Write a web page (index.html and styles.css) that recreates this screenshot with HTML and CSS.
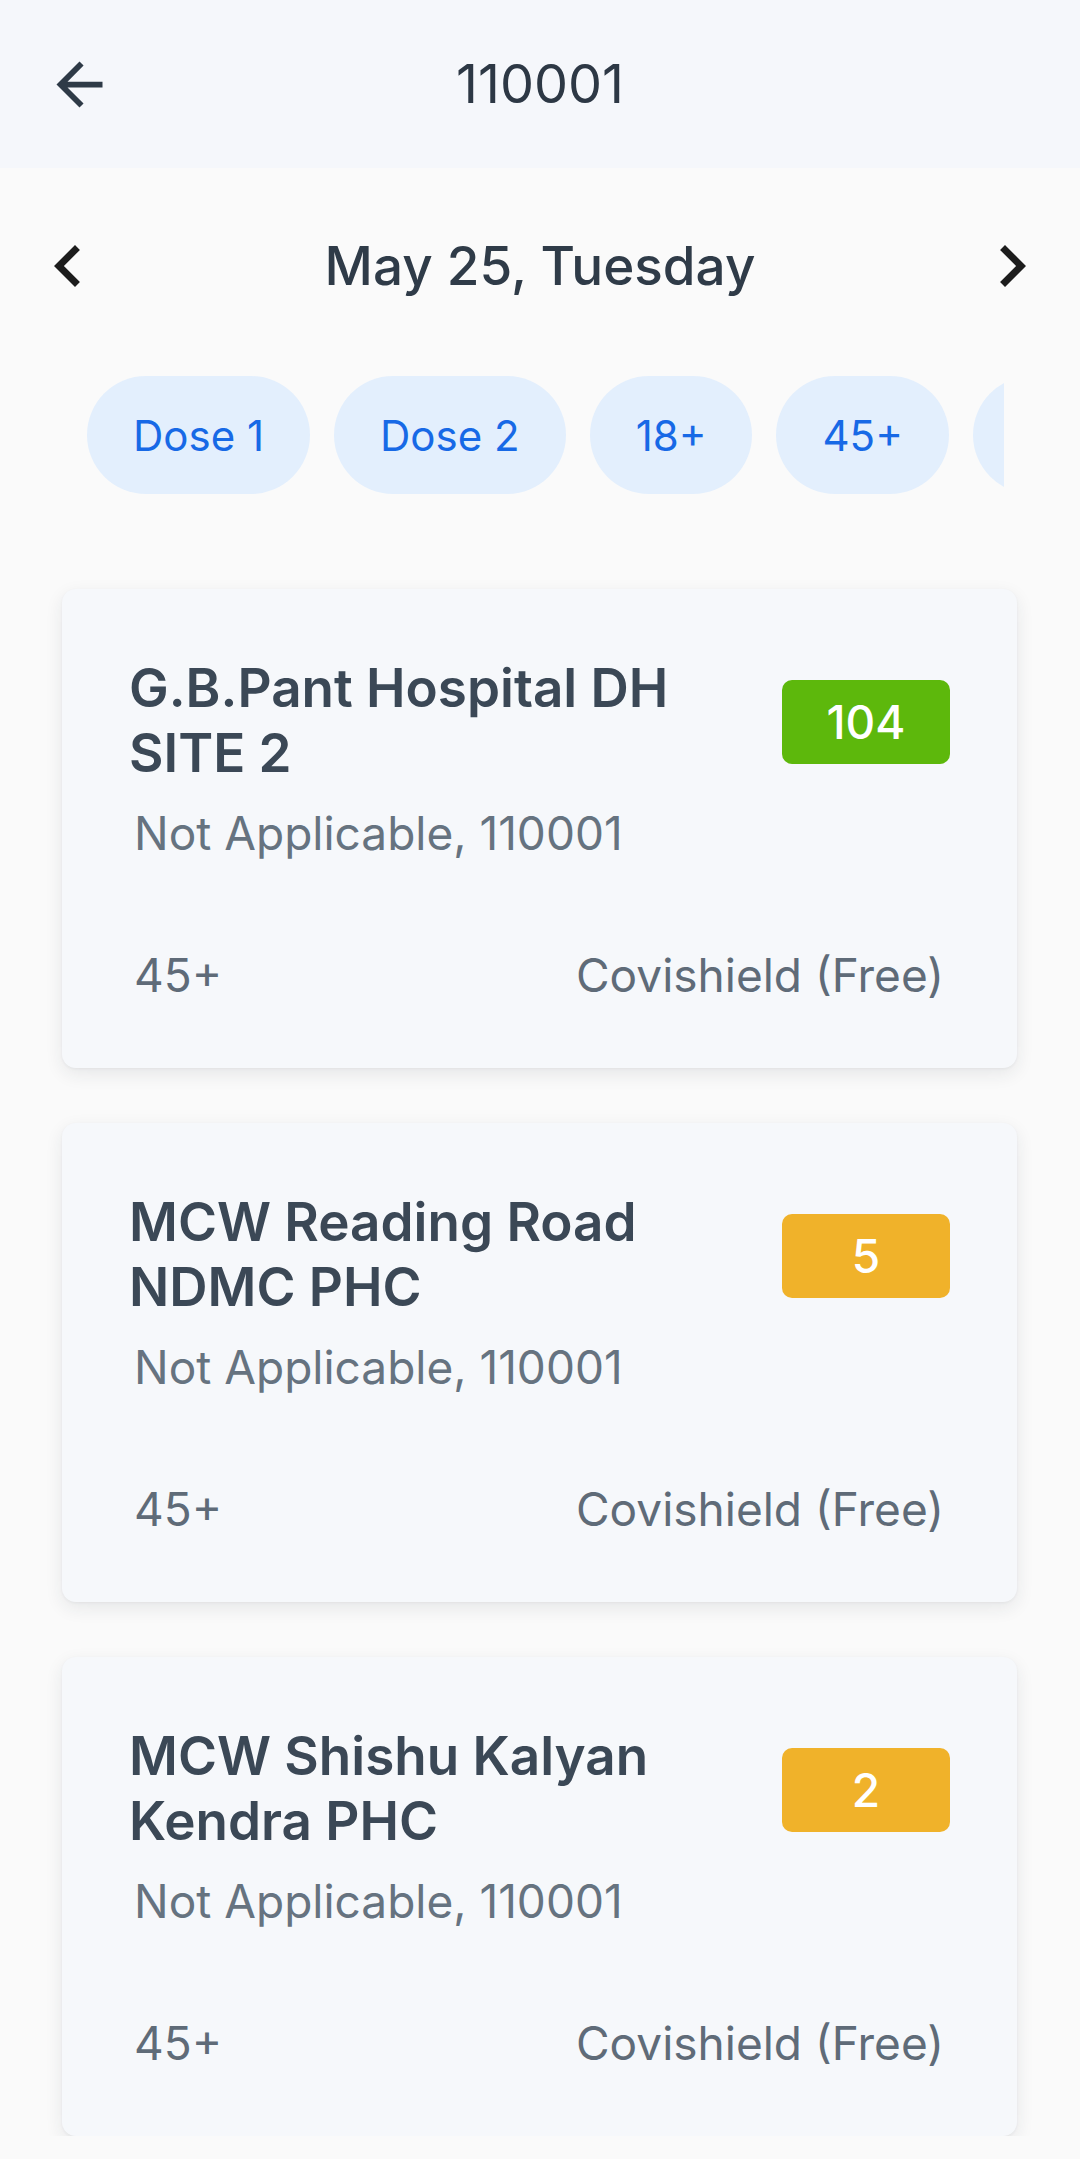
FILE: index.html
```html
<!DOCTYPE html>
<html lang="en">
<head>
<meta charset="utf-8">
<title>110001</title>
<link rel="stylesheet" href="styles.css">
</head>
<body>
<header class="topbar">
  <div class="topbar-left">
    <svg class="back-icon" viewBox="0 0 24 24"><path d="M20 11H7.83l5.59-5.59L12 4l-8 8 8 8 1.41-1.41L7.83 13H20v-2z"/></svg>
  </div>
  <h1 class="topbar-title">110001</h1>
  <div class="topbar-right"></div>
</header>

<main class="content">
  <div class="date-row">
    <svg class="chev" viewBox="0 0 24 24"><path d="M15.41 7.41L14 6l-6 6 6 6 1.41-1.41L10.83 12z"/></svg>
    <div class="date-text">May 25, Tuesday</div>
    <svg class="chev" viewBox="0 0 24 24"><path d="M10 6L8.59 7.41 13.17 12l-4.58 4.59L10 18l6-6z"/></svg>
  </div>

  <div class="chips">
    <span class="chip">Dose 1</span>
    <span class="chip">Dose 2</span>
    <span class="chip">18+</span>
    <span class="chip">45+</span>
    <span class="chip">Covishield</span>
    <span class="chip">Covaxin</span>
  </div>

  <div class="cards">
    <section class="card">
      <div class="card-top">
        <h2 class="card-title">G.B.Pant Hospital DH SITE 2</h2>
        <span class="badge badge-green">104</span>
      </div>
      <p class="card-sub">Not Applicable, 110001</p>
      <div class="card-bottom">
        <span>45+</span>
        <span>Covishield (Free)</span>
      </div>
    </section>

    <section class="card">
      <div class="card-top">
        <h2 class="card-title">MCW Reading Road NDMC PHC</h2>
        <span class="badge badge-amber">5</span>
      </div>
      <p class="card-sub">Not Applicable, 110001</p>
      <div class="card-bottom">
        <span>45+</span>
        <span>Covishield (Free)</span>
      </div>
    </section>

    <section class="card">
      <div class="card-top">
        <h2 class="card-title">MCW Shishu Kalyan Kendra PHC</h2>
        <span class="badge badge-amber">2</span>
      </div>
      <p class="card-sub">Not Applicable, 110001</p>
      <div class="card-bottom">
        <span>45+</span>
        <span>Covishield (Free)</span>
      </div>
    </section>
  </div>
</main>
</body>
</html>
```

FILE: styles.css
```css
* { box-sizing: border-box; }

html, body {
  margin: 0;
  padding: 0;
}

body {
  background: #fafafa;
  font-family: Inter, "Noto Sans", "Liberation Sans", sans-serif;
  color: #3b4856;
  width: 1080px;
  overflow: hidden;
}

.topbar {
  height: 168px;
  background: #f5f7fb;
  display: grid;
  grid-template-columns: 1fr auto 1fr;
  align-items: center;
}

.topbar-left {
  display: flex;
  align-items: center;
  padding-left: 45px;
}

.back-icon {
  width: 69px;
  height: 69px;
  fill: #2e3a47;
  display: block;
}

.topbar-title {
  margin: 0;
  font-size: 54px;
  font-weight: 400;
  color: #2d3845;
  line-height: 1;
}

.date-row {
  height: 196px;
  display: flex;
  align-items: center;
  justify-content: space-between;
  padding: 0 26px;
}

.chev {
  width: 84px;
  height: 84px;
  fill: #1c1c1c;
  display: block;
}

.date-text {
  font-size: 53px;
  font-weight: 500;
  color: #2f3b48;
  line-height: 1;
}

.chips {
  margin: 12px 0 0 87px;
  width: 917px;
  display: flex;
  gap: 24px;
  overflow: hidden;
}

.chip {
  flex-shrink: 0;
  height: 118px;
  padding: 0 46px;
  border-radius: 59px;
  background: #e3effd;
  color: #1769e6;
  font-size: 42px;
  font-weight: 400;
  display: flex;
  align-items: center;
}

.cards {
  margin-top: 95px;
  padding: 0 63px 0 62px;
  display: flex;
  flex-direction: column;
  gap: 55px;
}

.card {
  background: #f6f8fb;
  border-radius: 14px;
  padding: 67px 67px 65px;
  box-shadow: 0 6px 18px rgba(30, 40, 60, 0.09), 0 1px 3px rgba(30, 40, 60, 0.05);
}

.card-top {
  display: flex;
  align-items: flex-start;
  gap: 40px;
}

.card-title {
  flex: 1;
  margin: 0;
  font-size: 53px;
  font-weight: 600;
  line-height: 65px;
  color: #3b4856;
}

.badge {
  flex-shrink: 0;
  width: 168px;
  height: 84px;
  margin-top: 24px;
  border-radius: 10px;
  color: #ffffff;
  font-size: 46px;
  font-weight: 500;
  display: flex;
  align-items: center;
  justify-content: center;
}

.badge-green { background: #5db80c; }
.badge-amber { background: #f0b22a; }

.card-sub {
  margin: 19px 0 0;
  padding-left: 5px;
  font-size: 46px;
  line-height: 56px;
  color: #667380;
}

.card-bottom {
  margin-top: 86px;
  padding: 0 6px 0 5px;
  display: flex;
  justify-content: space-between;
  font-size: 46px;
  line-height: 56px;
  color: #5f6b78;
}
```
